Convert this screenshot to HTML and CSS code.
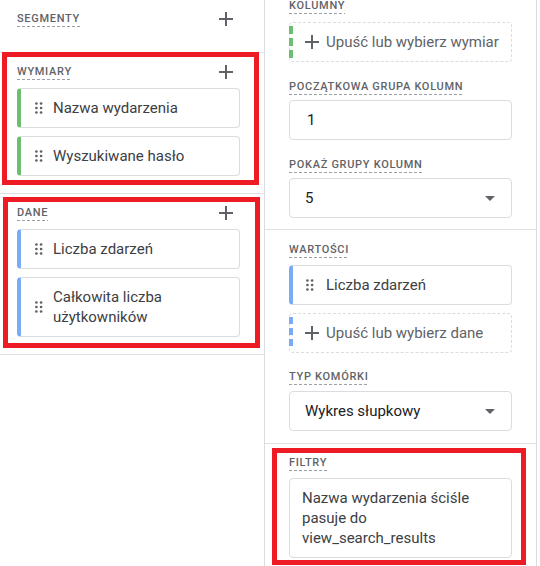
FILE: index.html
```html
<!DOCTYPE html>
<html lang="pl">
<head>
<meta charset="utf-8">
<title>Ustawienia karty</title>
<link rel="stylesheet" href="styles.css">
</head>
<body>
<div class="app">
  <aside class="panel panel-left">
    <section class="sec sec-seg">
      <div class="sec-head">
        <span class="label">Segmenty</span>
        <span class="add"><svg width="14" height="14" viewBox="0 0 14 14"><path d="M7 0v14M0 7h14" stroke="currentColor" stroke-width="2" fill="none"/></svg></span>
      </div>
    </section>
    <section class="sec">
      <div class="sec-head">
        <span class="label">Wymiary</span>
        <span class="add"><svg width="14" height="14" viewBox="0 0 14 14"><path d="M7 0v14M0 7h14" stroke="currentColor" stroke-width="2" fill="none"/></svg></span>
      </div>
      <div class="chips">
        <div class="chip chip-dim">
          <svg class="handle" width="8" height="12" viewBox="0 0 8 12"><circle cx="1.4" cy="1.5" r="1.35"/><circle cx="6.1" cy="1.5" r="1.35"/><circle cx="1.4" cy="6" r="1.35"/><circle cx="6.1" cy="6" r="1.35"/><circle cx="1.4" cy="10.5" r="1.35"/><circle cx="6.1" cy="10.5" r="1.35"/></svg>
          <span class="chip-text">Nazwa wydarzenia</span>
        </div>
        <div class="chip chip-dim">
          <svg class="handle" width="8" height="12" viewBox="0 0 8 12"><circle cx="1.4" cy="1.5" r="1.35"/><circle cx="6.1" cy="1.5" r="1.35"/><circle cx="1.4" cy="6" r="1.35"/><circle cx="6.1" cy="6" r="1.35"/><circle cx="1.4" cy="10.5" r="1.35"/><circle cx="6.1" cy="10.5" r="1.35"/></svg>
          <span class="chip-text">Wyszukiwane hasło</span>
        </div>
      </div>
    </section>
    <section class="sec">
      <div class="sec-head">
        <span class="label">Dane</span>
        <span class="add"><svg width="14" height="14" viewBox="0 0 14 14"><path d="M7 0v14M0 7h14" stroke="currentColor" stroke-width="2" fill="none"/></svg></span>
      </div>
      <div class="chips">
        <div class="chip chip-met">
          <svg class="handle" width="8" height="12" viewBox="0 0 8 12"><circle cx="1.4" cy="1.5" r="1.35"/><circle cx="6.1" cy="1.5" r="1.35"/><circle cx="1.4" cy="6" r="1.35"/><circle cx="6.1" cy="6" r="1.35"/><circle cx="1.4" cy="10.5" r="1.35"/><circle cx="6.1" cy="10.5" r="1.35"/></svg>
          <span class="chip-text">Liczba zdarzeń</span>
        </div>
        <div class="chip chip-met">
          <svg class="handle" width="8" height="12" viewBox="0 0 8 12"><circle cx="1.4" cy="1.5" r="1.35"/><circle cx="6.1" cy="1.5" r="1.35"/><circle cx="1.4" cy="6" r="1.35"/><circle cx="6.1" cy="6" r="1.35"/><circle cx="1.4" cy="10.5" r="1.35"/><circle cx="6.1" cy="10.5" r="1.35"/></svg>
          <span class="chip-text">Całkowita liczba<br>użytkowników</span>
        </div>
      </div>
    </section>
  </aside>

  <main class="panel panel-right">
    <section class="sec sec-cols">
      <div class="sec-head"><span class="label">Kolumny</span></div>
      <div class="drop drop-dim field-first">
        <svg class="plus" width="14" height="14" viewBox="0 0 14 14"><path d="M7 0v14M0 7h14" stroke="currentColor" stroke-width="2" fill="none"/></svg>
        <span>Upuść lub wybierz wymiar</span>
      </div>
      <div class="sec-head head-gap"><span class="label">Początkowa grupa kolumn</span></div>
      <div class="box input">1</div>
      <div class="sec-head head-gap"><span class="label">Pokaż grupy kolumn</span></div>
      <div class="box select"><span>5</span><span class="caret"></span></div>
    </section>
    <section class="sec sec-vals">
      <div class="sec-head"><span class="label">Wartości</span></div>
      <div class="chip chip-met chip-right">
        <svg class="handle" width="8" height="12" viewBox="0 0 8 12"><circle cx="1.4" cy="1.5" r="1.35"/><circle cx="6.1" cy="1.5" r="1.35"/><circle cx="1.4" cy="6" r="1.35"/><circle cx="6.1" cy="6" r="1.35"/><circle cx="1.4" cy="10.5" r="1.35"/><circle cx="6.1" cy="10.5" r="1.35"/></svg>
        <span class="chip-text">Liczba zdarzeń</span>
      </div>
      <div class="drop drop-met drop-gap">
        <svg class="plus" width="14" height="14" viewBox="0 0 14 14"><path d="M7 0v14M0 7h14" stroke="currentColor" stroke-width="2" fill="none"/></svg>
        <span>Upuść lub wybierz dane</span>
      </div>
      <div class="sec-head head-gap"><span class="label">Typ komórki</span></div>
      <div class="box select"><span>Wykres słupkowy</span><span class="caret"></span></div>
    </section>
    <section class="sec sec-filters">
      <div class="sec-head"><span class="label">Filtry</span></div>
      <div class="box filter">Nazwa wydarzenia ściśle pasuje do view_search_results</div>
    </section>
  </main>

  <div class="mark mark-dims"></div>
  <div class="mark mark-data"></div>
  <div class="mark mark-filters"></div>
</div>
</body>
</html>
```

FILE: styles.css
```css
* { box-sizing: border-box; }

html, body {
  margin: 0;
  padding: 0;
  background: #fff;
}

body {
  font-family: "Roboto", "Noto Sans", sans-serif;
  color: #3c4043;
  width: 540px;
  height: 566px;
  overflow: hidden;
}

.app {
  position: relative;
  display: flex;
  align-items: stretch;
  height: 566px;
}

.panel {
  height: 566px;
  overflow: hidden;
}

.panel-left {
  width: 265px;
  border-right: 1px solid #dadce0;
}

.panel-right {
  width: 272px;
  border-right: 1px solid #dadce0;
}

.sec {
  border-bottom: 1px solid #e0e0e0;
}

.panel-left .sec {
  padding: 7px 24px 17px 17px;
}

.panel-left .sec.sec-seg {
  padding-bottom: 21px;
}

.panel-right .sec {
  padding: 7px 24px 12px 24px;
}

.panel-right .sec.sec-cols {
  margin-top: -7px;
  padding-top: 0;
  padding-bottom: 11px;
}

.panel-right .sec.sec-filters {
  padding-top: 6px;
  border-bottom: none;
}

.sec-head {
  height: 24px;
  display: flex;
  align-items: center;
  justify-content: space-between;
}

.panel-right .sec-head {
  padding-top: 3px;
}

.head-gap {
  margin-top: 12px;
}

.sec-vals .head-gap {
  margin-top: 11px;
}

.label {
  font-size: 11px;
  line-height: 13px;
  font-weight: 500;
  letter-spacing: 0.7px;
  text-transform: uppercase;
  color: #5f6368;
  padding-bottom: 2px;
  background-image: repeating-linear-gradient(to right, #9aa0a6 0 3px, transparent 3px 5px);
  background-size: 100% 1px;
  background-repeat: no-repeat;
  background-position: left bottom;
}

.add {
  width: 24px;
  height: 24px;
  margin-right: 2px;
  display: flex;
  align-items: center;
  justify-content: center;
  color: #5f6368;
}

.add svg { display: block; }

.chips {
  margin-top: 4px;
  display: flex;
  flex-direction: column;
  gap: 8px;
}

.chip {
  display: flex;
  align-items: center;
  min-height: 40px;
  padding: 9px 12px 9px 14px;
  border: 1px solid #dadce0;
  border-left-width: 4px;
  border-radius: 4px;
  background: #fff;
}

.chip-dim { border-left-color: #6cbf70; }
.chip-met { border-left-color: #7baaf7; }

.chip-right {
  margin-top: 4px;
  padding-left: 13px;
}

.handle {
  flex: none;
  fill: #5f6368;
  margin-right: 10px;
}

.chip-right .handle { margin-right: 12px; }

.chip-text {
  font-size: 15px;
  line-height: 20px;
  color: #3c4043;
}

.drop {
  position: relative;
  display: flex;
  align-items: center;
  height: 40px;
  padding-left: 15px;
  border: 1px dashed #dadce0;
  border-radius: 4px;
  font-size: 15px;
  color: #5f6368;
}

.drop::before {
  content: "";
  position: absolute;
  left: -1px;
  top: 3px;
  bottom: 3px;
  width: 4px;
}

.drop-dim::before {
  background: repeating-linear-gradient(to bottom, #6cbf70 0 8px, transparent 8px 12px);
}

.drop-met::before {
  background: repeating-linear-gradient(to bottom, #7baaf7 0 7px, transparent 7px 11px);
}

.field-first { margin-top: 5px; }
.drop-gap { margin-top: 8px; }

.plus {
  flex: none;
  color: #5f6368;
  margin-right: 7px;
}

.box {
  border: 1px solid #dadce0;
  border-radius: 4px;
  margin-top: 2px;
  font-size: 15px;
  color: #202124;
}

.sec-vals .box {
  margin-top: 3px;
}

.input {
  height: 40px;
  display: flex;
  align-items: center;
  padding-left: 17px;
}

.select {
  height: 40px;
  display: flex;
  align-items: center;
  justify-content: space-between;
  padding-left: 15px;
  padding-right: 16px;
}

.caret {
  width: 0;
  height: 0;
  border-left: 5px solid transparent;
  border-right: 5px solid transparent;
  border-top: 5px solid #5f6368;
}

.filter {
  margin-top: 4px;
  padding: 9px 20px 9px 12px;
  line-height: 20px;
  color: #3c4043;
}

.mark {
  position: absolute;
  border: 5px solid #ed1c24;
  pointer-events: none;
}

.mark-dims {
  left: 2px;
  top: 52px;
  width: 257px;
  height: 133px;
}

.mark-data {
  left: 3px;
  top: 197px;
  width: 257px;
  height: 151px;
}

.mark-filters {
  left: 272px;
  top: 448px;
  width: 254px;
  height: 117px;
}
```
